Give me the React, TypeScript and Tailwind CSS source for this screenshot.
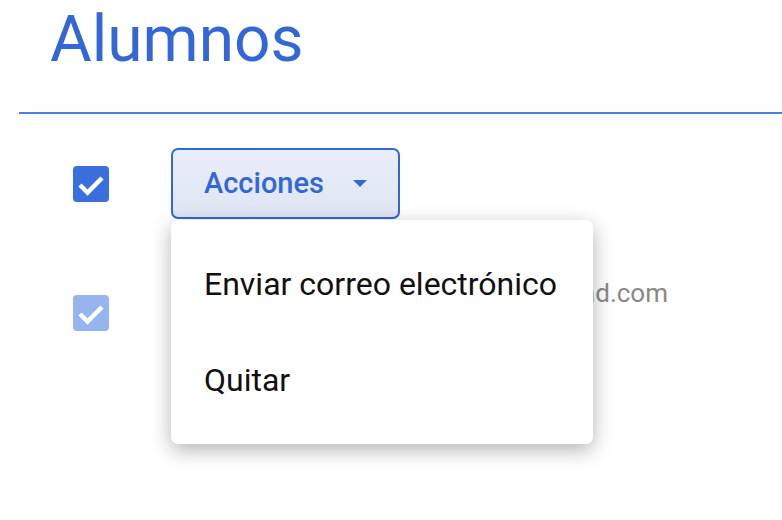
import React from 'react'

function Checkbox({ faded }: { faded?: boolean }) {
  return (
    <div
      className={`flex h-9 w-9 shrink-0 items-center justify-center rounded-[4px] ${
        faded ? 'bg-[#96b5ef]' : 'bg-[#3a70dd]'
      }`}
    >
      <svg viewBox="0 0 36 36" className="h-9 w-9">
        <path d="M7 19 L14.5 26.5 L29 12" fill="none" stroke="white" strokeWidth="4.5" />
      </svg>
    </div>
  )
}

export default function App() {
  return (
    <div className="h-[520px] w-[782px] overflow-hidden bg-white font-['Roboto',sans-serif]">
      <h1 className="ml-[50px] mt-2 text-[64px] leading-[64px] text-[#3367d6]">Alumnos</h1>
      <div className="ml-[19px] mt-[40px] h-[2px] bg-[#4a80e0]" />

      <div className="mt-[34px] flex items-center pl-[73px]">
        <Checkbox />
        <div className="relative ml-[62px]">
          <button className="flex h-[71px] w-[229px] items-center justify-between rounded-[7px] border-2 border-[#3367d6] bg-gradient-to-b from-[#e9eef9] to-[#dfe5f3] pl-[31px] pr-[31px] text-[29px] font-medium text-[#3367d6]">
            <span>Acciones</span>
            <svg viewBox="0 0 14 7" className="h-[7px] w-[14px]">
              <path d="M0 0 L14 0 L7 7 Z" fill="#3367d6" />
            </svg>
          </button>

          <div className="absolute left-0 top-full z-10 mt-[1px] w-[422px] rounded-[7px] bg-white py-4 shadow-[0_6px_20px_rgba(0,0,0,0.3)]">
            <div className="flex h-24 items-center pl-[33px] text-[32px] text-[#111]">
              Enviar correo electrónico
            </div>
            <div className="flex h-24 items-center pl-[33px] text-[32px] text-[#111]">Quitar</div>
          </div>
        </div>
      </div>

      <div className="mt-[56px] flex items-start pl-[73px]">
        <div className="mt-5">
          <Checkbox faded />
        </div>
        <div className="ml-[95px] w-[464px] whitespace-nowrap text-right text-[26px] leading-9 text-[#888]">
          sofia.martinez@universidad.com
        </div>
      </div>
    </div>
  )
}
